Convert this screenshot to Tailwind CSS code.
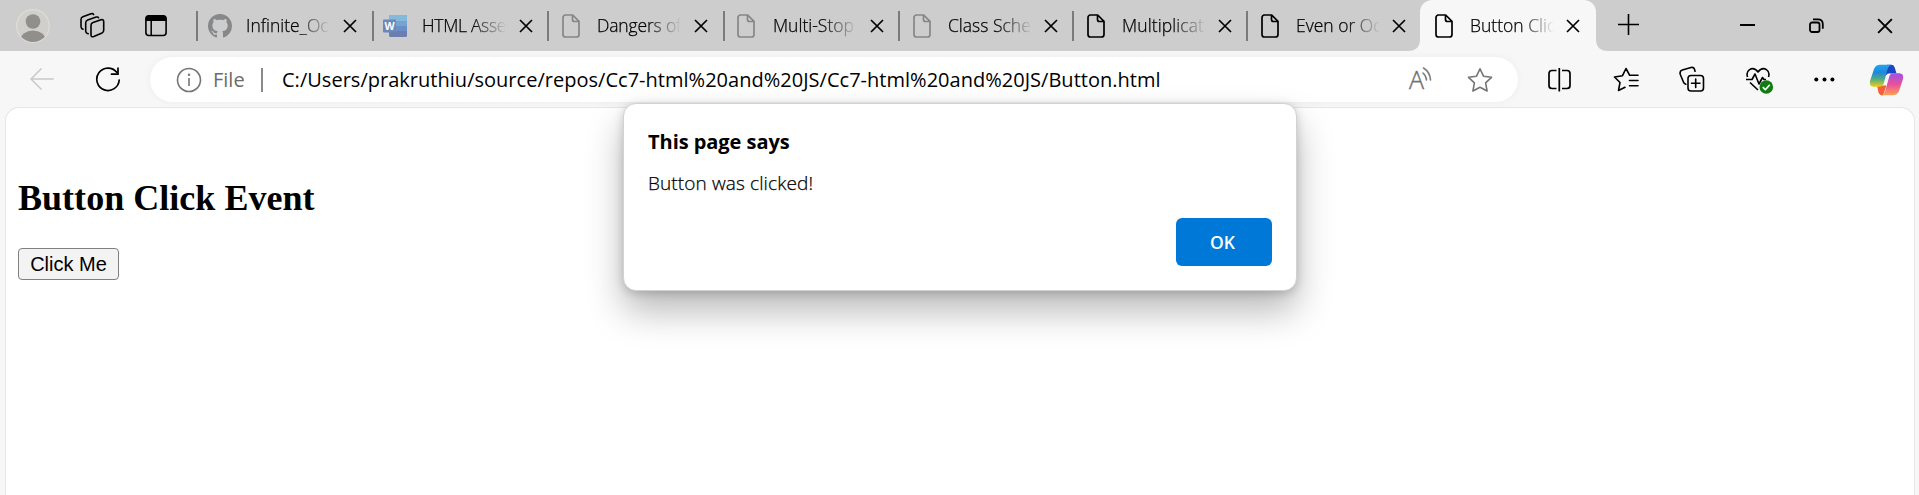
<!DOCTYPE html>
<html lang="en">
<head>
<meta charset="utf-8">
<title>Button Click Event</title>
<script src="https://cdn.jsdelivr.net/npm/@tailwindcss/browser@4"></script>
</head>
<body class="h-[495px] w-[1919px] overflow-hidden bg-[#f7f7f7] font-['Open_Sans',sans-serif] text-black">
<svg class="hidden">
  <symbol id="doc" viewBox="0 0 24 24"><path d="M5.500 1h8.200L20 7.300v13.200a2.500 2.500 0 0 1-2.500 2.500h-11A2.500 2.500 0 0 1 4 20.500V3.500A2.500 2.500 0 0 1 6.500 1M13.500 1v4.500a2 2 0 0 0 2 2H20" fill="none" stroke="currentColor" stroke-width="1.700"/></symbol>
  <symbol id="x" viewBox="0 0 14 14"><path d="M1 1l12 12M13 1L1 13" fill="none" stroke="currentColor" stroke-width="1.700"/></symbol>
</svg>

<header class="flex h-[51px] bg-[#cdcdcd] [-webkit-text-stroke:0.25px_#000]">
  <div class="flex w-[196px] shrink-0 items-start">
    <svg class="ml-4 mt-[9px] size-[34px]" viewBox="0 0 34 34"><defs><clipPath id="av"><circle cx="17" cy="17" r="16"/></clipPath></defs><circle cx="17" cy="17" r="16.300" fill="#d0cfcb" stroke="#dddcd5" stroke-width="1.300"/><circle cx="17" cy="12.500" r="7.300" fill="#918f8c"/><ellipse cx="17" cy="31" rx="12.500" ry="9.500" fill="#918f8c" clip-path="url(#av)"/></svg>
    <svg class="ml-[30px] mt-3 size-[27px]" viewBox="0 0 27 27" fill="none" stroke="#000" stroke-width="1.600" stroke-linejoin="round" stroke-linecap="round"><path d="M11 13.300q0-2.200 2-2.900l8-2.600q2.700-.7 2.700 2v8.500q0 2-1.700 2.800l-8.200 3.400q-2.800 1-2.800-1.600zM8.200 21.700l-1.200-.5q-1.300-.6-1.300-2.200v-8.300q0-2 2-2.800l8.500-2.800q1.800-.5 2.300.6M3 17.200q-2-.6-2-2.700V7.500q0-2 1.900-2.700l8.100-3q2-.6 2.600.7"/></svg>
    <svg class="ml-[38px] mt-[15px] h-[22px] w-[22px]" viewBox="0 0 22 22"><rect x=".9" y=".9" width="20.200" height="19.600" rx="3" fill="none" stroke="#000" stroke-width="1.600"/><path d="M.5 6V4Q.5.500 4 .5h14Q21.500.500 21.500 4v2z"/><path d="M6.200 6v14" stroke="#000" stroke-width="1.500"/></svg>
  </div>

  <div class="flex h-[51px] w-[176px] shrink-0 items-center">
    <i class="h-[30px] w-0.5 bg-[#7b7b7b]"></i>
    <svg class="ml-[10px] size-6" viewBox="0 0 16 16" fill="#868889"><path d="M8 0C3.580 0 0 3.580 0 8c0 3.540 2.290 6.530 5.470 7.590.4.070.55-.17.55-.38 0-.19-.01-.82-.01-1.490-2.010.37-2.530-.49-2.690-.94-.09-.23-.48-.94-.82-1.130-.28-.15-.68-.52-.01-.53.63-.01 1.080.58 1.230.82.720 1.210 1.870.87 2.330.66.070-.52.280-.87.510-1.070-1.780-.2-3.640-.89-3.640-3.950 0-.87.310-1.590.82-2.150-.08-.2-.36-1.020.08-2.120 0 0 .67-.21 2.200.82.640-.18 1.320-.27 2-.27s1.360.09 2 .27c1.530-1.040 2.200-.82 2.200-.82.440 1.100.160 1.920.080 2.120.510.560.820 1.270.820 2.150 0 3.070-1.870 3.750-3.650 3.950.290.250.540.730.540 1.480 0 1.070-.01 1.930-.01 2.200 0 .21.150.46.550.38A8.010 8.010 0 0 0 16 8c0-4.420-3.580-8-8-8z"/></svg>
    <span class="ml-[14px] w-[84px] overflow-hidden whitespace-nowrap text-[17.500px] font-light tracking-[0px] mask-r-from-60% mask-r-to-100%">Infinite_Oc</span>
    <svg class="ml-[13px] size-[14px]"><use href="#x"/></svg>
  </div>
  <div class="flex h-[51px] w-[175px] shrink-0 items-center">
    <i class="h-[30px] w-0.5 bg-[#7b7b7b]"></i>
    <svg class="ml-[9px] size-6" viewBox="0 0 24 24"><rect x="6" y="1" width="18" height="22" rx="1.500" fill="#6a7fb0"/><path d="M6 7V2.500Q6 1 7.500 1h15Q24 1 24 2.500V7z" fill="#84b9dc"/><path d="M6 7h18v5H6z" fill="#74a4d3"/><path d="M6 12h18v5H6z" fill="#6b8fc5"/><rect y="5.500" width="13" height="13" rx="1" fill="#6c87b8"/><text x="6.500" y="15.700" text-anchor="middle" font-family="Open Sans" font-weight="700" font-size="10.500" fill="#fff" class="[-webkit-text-stroke:0]">W</text></svg>
    <span class="ml-[15px] w-[84px] overflow-hidden whitespace-nowrap text-[17.500px] font-light tracking-[-0.300px] mask-r-from-60% mask-r-to-100%">HTML Asse</span>
    <svg class="ml-[13px] size-[14px]"><use href="#x"/></svg>
  </div>
  <div class="flex h-[51px] w-[176px] shrink-0 items-center">
    <i class="h-[30px] w-0.5 bg-[#7b7b7b]"></i>
    <svg class="ml-[10px] size-6 text-[#868686]"><use href="#doc"/></svg>
    <span class="ml-[14px] w-[84px] overflow-hidden whitespace-nowrap text-[17.500px] font-light tracking-[-0.150px] mask-r-from-60% mask-r-to-100%">Dangers of</span>
    <svg class="ml-[13px] size-[14px]"><use href="#x"/></svg>
  </div>
  <div class="flex h-[51px] w-[175px] shrink-0 items-center">
    <i class="h-[30px] w-0.5 bg-[#7b7b7b]"></i>
    <svg class="ml-[9px] size-6 text-[#868686]"><use href="#doc"/></svg>
    <span class="ml-[15px] w-[84px] overflow-hidden whitespace-nowrap text-[17.500px] font-light mask-r-from-60% mask-r-to-100%">Multi-Stop</span>
    <svg class="ml-[13px] size-[14px]"><use href="#x"/></svg>
  </div>
  <div class="flex h-[51px] w-[174px] shrink-0 items-center">
    <i class="h-[30px] w-0.5 bg-[#7b7b7b]"></i>
    <svg class="ml-[10px] size-6 text-[#868686]"><use href="#doc"/></svg>
    <span class="ml-[14px] w-[84px] overflow-hidden whitespace-nowrap text-[17.500px] font-light mask-r-from-60% mask-r-to-100%">Class Sche</span>
    <svg class="ml-[12px] size-[14px]"><use href="#x"/></svg>
  </div>
  <div class="flex h-[51px] w-[174px] shrink-0 items-center">
    <i class="h-[30px] w-0.5 bg-[#7b7b7b]"></i>
    <svg class="ml-[10px] size-6"><use href="#doc"/></svg>
    <span class="ml-[14px] w-[84px] overflow-hidden whitespace-nowrap text-[17.500px] font-light tracking-[0.100px] mask-r-from-60% mask-r-to-100%">Multiplicat</span>
    <svg class="ml-[12px] size-[14px]"><use href="#x"/></svg>
  </div>
  <div class="flex h-[51px] w-[174px] shrink-0 items-center">
    <i class="h-[30px] w-0.5 bg-[#7b7b7b]"></i>
    <svg class="ml-[10px] size-6"><use href="#doc"/></svg>
    <span class="ml-[14px] w-[84px] overflow-hidden whitespace-nowrap text-[17.500px] font-light mask-r-from-60% mask-r-to-100%">Even or Od</span>
    <svg class="ml-[12px] size-[14px]"><use href="#x"/></svg>
  </div>
  <div class="relative flex h-[51px] w-[176px] shrink-0 items-center rounded-t-xl bg-[#f7f7f7]">
    <svg class="absolute -left-3 bottom-0 size-3" viewBox="0 0 12 12" fill="#f7f7f7"><path d="M0 12Q12 12 12 0v12z"/></svg>
    <svg class="absolute -right-3 bottom-0 size-3" viewBox="0 0 12 12" fill="#f7f7f7"><path d="M12 12Q0 12 0 0v12z"/></svg>
    <svg class="ml-3 size-6"><use href="#doc"/></svg>
    <span class="ml-[14px] w-[84px] overflow-hidden whitespace-nowrap text-[17.500px] font-light mask-r-from-60% mask-r-to-100%">Button Clic</span>
    <svg class="ml-[12px] size-[14px]"><use href="#x"/></svg>
  </div>
  <div class="flex flex-1 items-start">
    <svg class="ml-[22px] mt-[14px] size-[21px]" viewBox="0 0 21 21" stroke="#000" stroke-width="1.600"><path d="M0 10.500h21M10.500 0v21"/></svg>
    <svg class="ml-[101px] mt-6 h-[2px] w-[15px]"><rect width="15" height="2"/></svg>
    <svg class="ml-[54px] mt-[18px] h-[15px] w-[15px]" viewBox="0 0 15 15" fill="none" stroke="#000" stroke-width="1.800"><rect x="1" y="4.500" width="9.500" height="9.500" rx="2"/><path d="M4 1.300h5q4.800 0 4.800 4.800v4.600"/></svg>
    <svg class="ml-[53px] mt-[18px] size-[16px]" viewBox="0 0 14 14"><use href="#x"/></svg>
  </div>
</header>

<nav class="flex h-[56px] items-start pt-1.5">
  <svg class="ml-[29px] mt-[10px] h-[24px] w-[25px]" viewBox="0 0 25 24" fill="none" stroke="#c9c9c9" stroke-width="1.500"><path d="M12.500 1.500L2 12l10.500 10.500M2 12h22.700"/></svg>
  <svg class="ml-[41px] mt-[9px] size-[27px]" viewBox="0 0 27 27" fill="none" stroke="#000" stroke-width="1.700"><path d="M24.200 14A11.200 11.200 0 1 1 21.700 6.200M23 2v6.200h-6.500" stroke-linecap="round"/></svg>
  <div class="ml-[28px] flex h-[45px] w-[1368px] items-center rounded-full bg-white shadow-[0_0_8px_#0000000c]">
    <svg class="ml-[26px] size-[26px]" viewBox="0 0 26 26" fill="none" stroke="#757575" stroke-width="1.600"><circle cx="13" cy="13" r="11.500"/><path d="M13 11v8"/><circle cx="13" cy="7.800" r=".5"/></svg>
    <span class="ml-[11px] w-[37px] whitespace-nowrap text-[20px] text-[#6c6c6c]">File</span>
    <i class="ml-[11px] h-6 w-0.5 bg-[#8a8a8a]"></i>
    <span class="ml-[19px] w-[1127px] whitespace-nowrap text-[20px] tracking-[0.020px]">C:/Users/prakruthiu/source/repos/Cc7-html%20and%20JS/Cc7-html%20and%20JS/Button.html</span>
    <svg class="h-6 w-6 overflow-visible" viewBox="0 0 24 24" fill="none" stroke="#7d7d7d" stroke-width="1.600"><text x="0" y="20.500" font-family="Open Sans" font-size="25" font-weight="300" fill="#707070" stroke="#707070" stroke-width=".4">A</text><path d="M14 5q3 2.500 3.500 7M14.500 0q6.500 4 7 12" stroke-linecap="round"/></svg>
    <svg class="ml-[34px] size-[26px]" viewBox="0 0 26 26" fill="none" stroke="#757575" stroke-width="1.600" stroke-linejoin="round"><path d="M13 1.800l3.500 7.400 8 1.100-5.900 5.600 1.500 8.100L13 20.200 5.900 24l1.500-8.100-5.900-5.600 8-1.100z"/></svg>
  </div>
  <svg class="ml-[29px] mt-[10px] h-[25px] w-[25px]" viewBox="0 0 25 25" fill="none" stroke="#000" stroke-width="1.700"><path d="M9.500 3.500H5q-3 0-3 3v12q0 3 3 3h4.500M15 3.500h5q3 0 3 3v12q0 3-3 3h-5M12.300 1v23.500"/></svg>
  <svg class="ml-[41px] mt-[10px] h-[25px] w-[26px]" viewBox="0 0 26 25" fill="none" stroke="#000" stroke-width="1.600" stroke-linejoin="round" stroke-linecap="round"><path d="M25 8.300h-8.300L13 1.500 9.500 8.700 1.500 10l5.500 5.500-1.500 8 6.500-3.200M16.500 13.500H25M16.500 18.700H25"/></svg>
  <svg class="ml-[40px] mt-[9px] h-[27px] w-[26px]" viewBox="0 0 26 27" fill="none" stroke="#000" stroke-width="1.600" stroke-linejoin="round" stroke-linecap="round"><rect x="9" y="9.500" width="15.500" height="15.500" rx="3"/><path d="M16.700 13v8.500M12.500 17.300H21M6.800 18.300q-1.800-.5-2.500-2.500L1.300 8.500q-1-3.500 2-4.500L12 1.500q2.800-.5 3.500 1.800l.5 2"/></svg>
  <svg class="ml-[40px] mt-[10px] h-[27px] w-[29px]" viewBox="0 0 29 27" fill="none" stroke="#000" stroke-width="1.600" stroke-linejoin="round"><path d="M2.500 10Q1 5 4.300 2.800 9-.3 13 5q4-5.300 8.700-2.200Q25 5 23.500 10M1 12.500h6l3-5.500 4 10 3.500-6.500 1.500 2h2M5 15.500l8 7.500"/><circle cx="21.300" cy="20" r="6.800" fill="#107c10" stroke="none"/><path d="M17.800 20.200l2.500 2.500 4.500-5" stroke="#fff" stroke-width="1.700"/></svg>
  <svg class="ml-[40px] mt-[20px] h-[5px] w-[21px]" viewBox="0 0 21 5"><circle cx="2.300" cy="2.500" r="2"/><circle cx="10.500" cy="2.500" r="2"/><circle cx="18.400" cy="2.500" r="2"/></svg>
  <svg class="ml-[34px] mt-[7px] h-[32px] w-[35px]" viewBox="0 0 35 32">
    <defs>
      <linearGradient id="c1" x1="0" y1="0" x2="0" y2="1"><stop offset="0" stop-color="#1fa5f0"/><stop offset=".35" stop-color="#2187d8"/><stop offset=".65" stop-color="#4eae82"/><stop offset="1" stop-color="#f6cc12"/></linearGradient>
      <linearGradient id="c2" x1="0" y1="0" x2="0" y2="1"><stop offset="0" stop-color="#a050ea"/><stop offset=".5" stop-color="#e8509c"/><stop offset="1" stop-color="#ffa050"/></linearGradient>
    </defs>
    <path d="M18 .8h4.500q2.500.2 3.300 3l1.700 5.600h-8.500l-3.500 3z" fill="#1c45c4"/>
    <path d="M8 21.500h9.500L14 31.500q-3.500 0-4.500-3z" fill="#f26139"/>
    <path d="M11 .8h11q-2.400.8-3.300 4L15 18.500q-1 4.300-4.500 4.300H4.500Q0 22.500 1 17L5 5Q6.500 1 11 .8z" fill="url(#c1)"/>
    <path d="M24 31.300H12.500q2.700-.6 3.600-4L20 13.500q1-4.200 4.500-4.200h6Q35 9.500 34 15l-4 12q-1.500 4-6 4.300z" fill="url(#c2)"/>
  </svg>
</nav>

<main class="relative ml-[5px] flex h-[388px] w-[1910px] flex-col items-start rounded-t-[14px] border-x border-t border-[#e6e6e6] bg-white pl-3">
  <h2 class="mt-[68px] font-['Liberation_Serif',serif] text-[36px] leading-[44px] font-bold tracking-[0.030px]">Button Click Event</h2>
  <button class="mt-[28px] h-8 w-[101px] rounded border border-[#808080] bg-[#f3f3f3] font-['Liberation_Sans',sans-serif] text-[20px] leading-[28px]">Click Me</button>
  <section role="dialog" class="absolute -top-[5px] left-[617px] flex h-[188px] w-[674px] flex-col rounded-[13px] border border-[#d2d2d2] bg-white px-[24px] pt-[22px] shadow-[0_20px_36px_#00000047,0_2px_10px_#0000002e]">
    <h1 class="whitespace-nowrap text-[20px] leading-[32px] font-bold tracking-[-0.050px]">This page says</h1>
    <p class="mt-[11px] whitespace-nowrap text-[19px] leading-[28px] font-light tracking-[0.120px] [-webkit-text-stroke:0.25px_#000]">Button was clicked!</p>
    <button class="mt-[21px] h-[48px] w-[96px] self-end rounded-md bg-[#0078d7] pr-[3px] text-[17.500px] font-semibold text-white">OK</button>
  </section>
</main>
</body>
</html>
